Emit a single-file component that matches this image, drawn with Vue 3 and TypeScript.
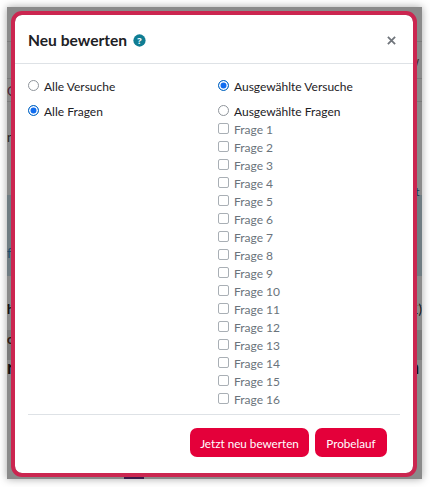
<script setup lang="ts">
const questions: number[] = Array.from({ length: 16 }, (_, i) => i + 1)
</script>

<template>
  <div class="page">
    <div class="backdrop">
      <span class="bg-band band-a"></span>
      <span class="bg-band band-b"></span>
      <span class="bg-line line-1"></span>
      <span class="bg-line line-2"></span>
      <span class="bg-line line-3"></span>
      <span class="bg-line line-4"></span>
      <span class="bg-text t-left1">O</span>
      <span class="bg-text t-left2">n</span>
      <span class="bg-text t-left3">fe</span>
      <span class="bg-text t-left4">hu</span>
      <span class="bg-text t-left5">cl</span>
      <span class="bg-text t-left6">r</span>
      <span class="bg-text t-right1">w</span>
      <span class="bg-text t-right2">rt</span>
      <span class="bg-text t-right3">1)</span>
      <span class="bg-text t-right4">n</span>
      <span class="bg-foot"></span>
    </div>

    <section class="modal">
      <header class="head">
        <h2 class="title">Neu bewerten</h2>
        <svg class="help" viewBox="0 0 14 14" aria-hidden="true">
          <circle cx="7" cy="7" r="6.6" fill="#0f7d93" />
          <text x="7" y="10.4" text-anchor="middle" class="help-q">?</text>
        </svg>
        <svg class="close" viewBox="0 0 10 10" aria-hidden="true">
          <path d="M1 1 L9 9 M9 1 L1 9" stroke="#70757b" stroke-width="2" fill="none" />
        </svg>
      </header>

      <div class="body">
        <div class="col">
          <label class="opt"><span class="radio"></span>Alle Versuche</label>
          <label class="opt"><span class="radio on"></span>Alle Fragen</label>
        </div>
        <div class="col">
          <label class="opt"><span class="radio on"></span>Ausgewählte Versuche</label>
          <label class="opt"><span class="radio"></span>Ausgewählte Fragen</label>
          <ul class="list">
            <li v-for="q in questions" :key="q" class="q">
              <span class="check"></span>Frage {{ q }}
            </li>
          </ul>
        </div>
      </div>

      <footer class="foot">
        <button class="btn wide">Jetzt neu bewerten</button>
        <button class="btn narrow">Probelauf</button>
      </footer>
    </section>
  </div>
</template>

<style>
html, body { margin: 0; background: #fff; }
</style>

<style scoped>
.page {
  position: relative;
  width: 430px;
  height: 487px;
  overflow: hidden;
  background: #fff;
  font-family: Lato, "Open Sans", sans-serif;
  padding: 11px 0 0 11px;
  box-sizing: border-box;
}
.backdrop {
  position: absolute;
  left: 7px;
  top: 7px;
  width: 415px;
  height: 472px;
  background: #8a8a8a;
  box-shadow: 0 0 8px rgba(0, 0, 0, 0.35);
  overflow: hidden;
}
.bg-band { position: absolute; left: 0; right: 0; }
.band-a { top: 188px; height: 81px; background: #6f7c82; }
.band-b { top: 323px; height: 30px; background: #7b7b7b; }
.bg-line { position: absolute; left: 0; right: 0; height: 1px; background: #7a7a7a; }
.line-1 { top: 34px; }
.line-2 { top: 71px; }
.line-3 { top: 94px; }
.line-4 { top: 298px; }
.bg-text { position: absolute; font-size: 13px; line-height: 16px; color: #4a2030; }
.t-left1 { left: 0; top: 76px; }
.t-left2 { left: 0; top: 122px; color: #222; }
.t-left3 { left: 0; top: 238px; color: #1c4a68; }
.t-left4 { left: 0; top: 294px; color: #111; font-weight: 700; }
.t-left5 { left: 0; top: 324px; color: #321a10; font-weight: 700; }
.t-left6 { left: 0; top: 349px; color: #111; font-size: 18px; font-weight: 700; line-height: 22px; }
.t-right1 { left: 402px; top: 46px; color: #4a1c2c; }
.t-right2 { left: 404px; top: 177px; color: #123a58; font-size: 12px; }
.t-right3 { left: 404px; top: 294px; color: #111; }
.t-right4 { left: 402px; top: 349px; color: #111; font-size: 18px; font-weight: 700; line-height: 22px; }
.bg-foot {
  position: absolute;
  left: 117px;
  bottom: 0;
  width: 20px;
  height: 8px;
  background: #3b1b4a;
}
.modal {
  position: relative;
  box-sizing: border-box;
  width: 406px;
  height: 466px;
  background: #fff;
  background-clip: padding-box;
  border: 4px solid #cb2650;
  border-radius: 11px;
  color: #1d2125;
  display: flex;
  flex-direction: column;
}
.head {
  display: flex;
  align-items: center;
  height: 49px;
  box-sizing: border-box;
  padding: 2px 17px 0 13px;
  border-bottom: 1px solid #dee2e6;
  flex: none;
}
.title {
  margin: 0;
  font-size: 15.6px;
  font-weight: 700;
  line-height: 20px;
  color: #1d2125;
}
.help { width: 13px; height: 13px; margin-left: 6px; }
.help-q { font: 700 10px "Open Sans", sans-serif; fill: #fff; }
.close { width: 9px; height: 9px; margin-left: auto; }
.body {
  display: grid;
  grid-template-columns: 190px 1fr;
  padding: 12px 13px 0;
  flex: 1;
}
.opt {
  display: flex;
  align-items: center;
  height: 20px;
  font-size: 12px;
  color: #1d2125;
}
.opt + .opt { margin-top: 5px; }
.radio {
  box-sizing: border-box;
  width: 11px;
  height: 11px;
  border: 1px solid #8f959b;
  border-radius: 50%;
  margin-right: 5px;
  margin-top: -2px;
  background: #fff;
  flex: none;
}
.radio.on {
  border-color: #0f6cbf;
  background: #0f6cf0;
  box-shadow: inset 0 0 0 1.5px #fff;
}
.list { list-style: none; margin: -1px 0 0; padding: 0; }
.q {
  display: flex;
  align-items: center;
  height: 18px;
  font-size: 12px;
  color: #6a737b;
}
.check {
  box-sizing: border-box;
  width: 11px;
  height: 11px;
  border: 1px solid #a9afb5;
  border-radius: 2px;
  margin-right: 5px;
  margin-top: -1px;
  background: #fff;
  flex: none;
}
.foot {
  margin: 0 13px;
  height: 59px;
  box-sizing: border-box;
  border-top: 1px solid #dee2e6;
  display: flex;
  justify-content: flex-end;
  align-items: flex-start;
  gap: 6px;
  padding: 13px 13px 0 0;
  flex: none;
}
.btn {
  height: 29px;
  border: 0;
  border-radius: 7px;
  background: #e4003a;
  color: #fff;
  font: 11.7px Lato, "Open Sans", sans-serif;
  padding: 0;
}
.wide { width: 119px; }
.narrow { width: 72px; }
</style>
